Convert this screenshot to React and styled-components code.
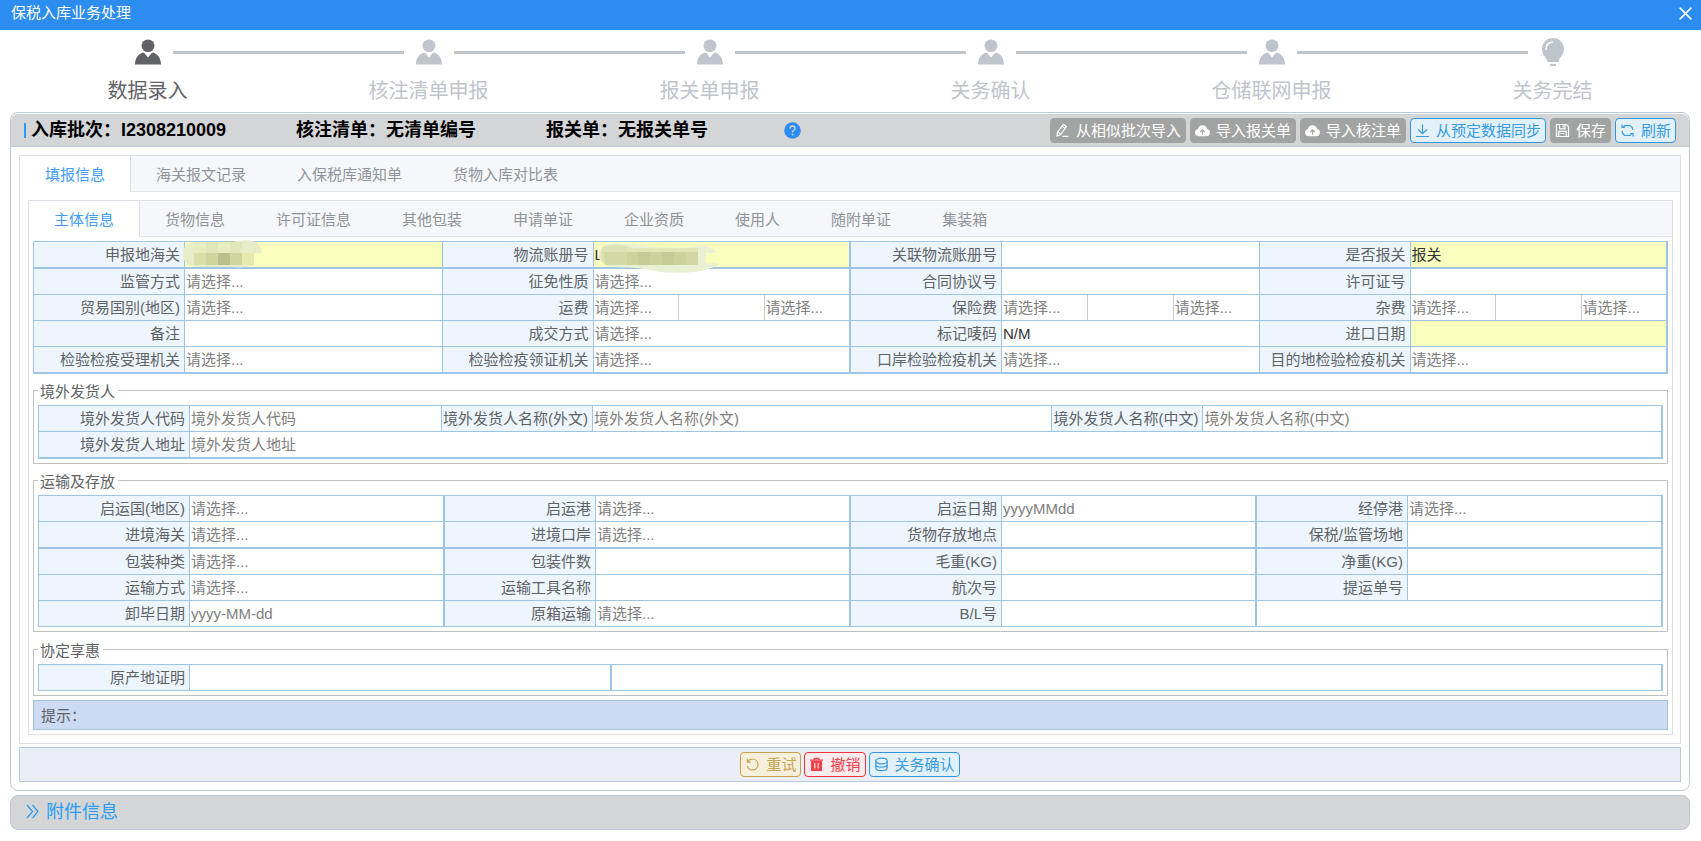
import React, { useState } from 'react'
import styled, { createGlobalStyle } from 'styled-components'

const GlobalStyle = createGlobalStyle`
* {
  box-sizing: border-box;
}
body {
  margin: 0;
  background: white;
  color: #606266;
  font-family: "Liberation Sans", "Noto Sans CJK SC", sans-serif;
  font-size: 15px;
}
input, select, button {
  font-family: inherit;
  font-size: inherit;
}
`

const TitleBar = styled.header`
display: flex;
justify-content: space-between;
align-items: center;
height: 30px;
padding: 0 9px 4px 11px;
background-color: #2d8cf0;
color: white;
`

const Title = styled.h1`
margin: 0;
font-size: 15px;
font-weight: normal;
line-height: 20px;
`

const CloseButton = styled.button`
display: flex;
padding: 0;
border: none;
background: none;
color: white;
cursor: pointer;
`

const Steps = styled.ol`
display: flex;
margin: 0;
padding: 8px 8px 7px 7px;
list-style: none;
`

const Step = styled.li`
flex: 1;
text-align: center;
color: ${props => props.$active ? '#606266' : '#c0c4cc'};
`

const StepHead = styled.div`
display: flex;
align-items: center;
height: 29px;
`

const StepLine = styled.span`
flex: 1;
height: 3px;
background-color: ${props => props.$hidden ? 'transparent' : '#c0c4cc'};
`

const StepIcon = styled.span`
display: flex;
justify-content: center;
width: 50px;
padding-bottom: 1px;
`

const StepTitle = styled.div`
margin-top: 10px;
font-size: 20px;
line-height: 28px;
`

const Panel = styled.main`
margin: 0 11px 0 10px;
padding-top: 1px;
border: 1px solid #bccad9;
border-radius: 8px;
`

const PanelHead = styled.div`
display: flex;
align-items: center;
justify-content: space-between;
height: 33px;
padding: 0 13px;
border-bottom: 1px solid #bccad9;
border-radius: 7px 7px 0 0;
background-color: #d4d5d7;
`

const Summary = styled.div`
display: flex;
align-items: center;
color: black;
font-size: 18px;
font-weight: bold;
line-height: 20px;
white-space: nowrap;
`

const Tick = styled.span`
width: 2px;
height: 15px;
margin-right: 5px;
background-color: #2a9cf5;
`

const SummaryItem = styled.span`
width: ${props => props.$width};
`

const HelpButton = styled.button`
display: flex;
padding: 0;
border: none;
background: none;
cursor: pointer;
`

const Toolbar = styled.div`
display: flex;
gap: ${props => props.$gap};
`

const tones = {
  grey: ['#a2a4a3', '#a2a4a3', 'white'],
  blue: ['#e2f0fa', '#2f96e0', '#3a9ce2'],
  gold: ['#f6efdc', '#c8a14a', '#c8a452'],
  red: ['#fdecee', '#f5303e', '#f5404c'],
}

const ToolButton = styled.button`
display: flex;
align-items: center;
gap: 6px;
height: 25px;
padding: 0 4px;
border: 1px solid ${props => tones[props.$tone][1]};
border-radius: 4px;
background-color: ${props => tones[props.$tone][0]};
color: ${props => tones[props.$tone][2]};
line-height: 23px;
white-space: nowrap;
cursor: pointer;
`

const PanelBody = styled.div`
padding: 8px;
`

const TabBox = styled.section`
border: 1px solid #dcdfe6;
background-color: white;
`

const TabBar = styled.div`
display: flex;
height: 36px;
border-bottom: 1px solid #e4e7ed;
background-color: #f5f7fa;
`

const Tab = styled.button`
height: 36px;
margin-left: -1px;
padding: 2px 25px 0;
border: 1px solid transparent;
border-top: none;
border-bottom: none;
background-color: transparent;
color: #909399;
line-height: 34px;
white-space: nowrap;
cursor: pointer;

&[aria-selected="true"] {
  border-color: #dcdfe6;
  background-color: white;
  color: #409eff;
}
`

const OuterContent = styled.div`
padding: 8px 7px 8px 8px;
`

const InnerContent = styled.form`
margin: 0;
padding: 4px;
`

const FormGrid = styled.div`
border: 1px solid #9fc5e4;
border-width: 1px 0 0 1px;
`

const FormRow = styled.div`
display: grid;
grid-template-columns: ${props => props.$columns || 'repeat(4, 1fr)'};
border-bottom: ${props => props.$thick ? '2px' : '1px'} solid #9fc5e4;
`

const Cell = styled.div`
display: flex;
min-width: 0;
height: 25px;
border-right: ${props => props.$thick ? '2px' : '1px'} solid #9fc5e4;
`

const Label = styled.label`
flex: none;
width: 151px;
padding-right: 4px;
border-right: 1px solid #9fc5e4;
background-color: #edf6fe;
line-height: 25px;
text-align: right;
white-space: nowrap;
`

const Field = styled.div`
position: relative;
display: flex;
flex: 1;
min-width: 0;
background-color: ${props => props.$required ? '#faffbd' : 'white'};
`

const TextInput = styled.input`
flex: 1;
width: 0;
min-width: 0;
height: 25px;
padding: 0 1px;
border: none;
outline: none;
background: transparent;
color: #303133;

&::placeholder {
  color: #808080;
}
select + & {
  border-left: 1px solid #ccc;
}
`

const Select = styled.select`
flex: 1;
width: 0;
min-width: 0;
height: 25px;
padding: 0 1px;
border: none;
outline: none;
appearance: none;
background: transparent;
color: ${props => props.$filled ? '#303133' : '#808080'};

input + & {
  border-left: 1px solid #ccc;
}
`

const MaskSvg = styled.svg`
position: absolute;
top: -2px;
left: ${props => props.$left};
z-index: 1;
pointer-events: none;
`

const Group = styled.fieldset`
min-width: 0;
margin: ${props => props.$gap || '6px'} 0 0;
padding: 4px;
border: 1px solid #c0c0c0;
`

const Legend = styled.legend`
padding: 2px 3px 0 2px;
line-height: 19px;
`

const Hint = styled.div`
height: 30px;
margin-top: 4px;
padding: 0 7px;
border: 1px solid #a3c3e3;
background-color: #cddbf2;
line-height: 29px;
`

const ActionBar = styled.div`
display: flex;
justify-content: center;
align-items: center;
height: 35px;
margin-top: 3px;
border: 1px solid #b9c8da;
background-color: #ebeef4;
`

const Attachment = styled.button`
display: flex;
align-items: center;
gap: 5px;
width: calc(100% - 21px);
height: 35px;
margin: 4px 11px 0 10px;
padding: 0 15px 2px;
border: 1px solid #bccad9;
border-radius: 8px;
background-color: #d4d5d7;
color: #2a9cf5;
font-size: 18px;
line-height: 24px;
cursor: pointer;
`

/* icons */

const UserIcon = () => (
  <svg width="26" height="26" viewBox="0 0 26 26" fill="currentColor">
    <ellipse cx="13" cy="6.8" rx="6.5" ry="6.3" />
    <path d="M0 25.500c0-5.400 2.600-10.300 8.200-12 .8.200 1.200.6 1.700 1.200L13 18.400l3.100-3.700c.5-.6.9-1 1.700-1.200 5.600 1.700 8.200 6.600 8.200 12z" />
  </svg>
)

const BulbIcon = () => (
  <svg width="22" height="28" viewBox="0 0 22 28" fill="currentColor">
    <path d="M11 0C4.900 0 0 4.900 0 11c0 3.500 1.500 6 3.400 8.200C4.800 20.800 5.200 22 5.300 24h11.400c.1-2 .5-3.200 1.900-4.800C20.500 17 22 14.500 22 11 22 4.900 17.100 0 11 0z" />
    <path d="M4 11.500C4 7.500 6.500 4.500 10.300 4" fill="none" stroke="white" strokeWidth="1.500" strokeLinecap="round" />
    <rect x="8" y="26" width="6" height="2" />
  </svg>
)

const CloseIcon = () => (
  <svg width="13" height="13" viewBox="0 0 13 13" stroke="currentColor" strokeWidth="1.600">
    <path d="M.6.6l11.800 11.800M12.400.6L.6 12.400" />
  </svg>
)

const HelpIcon = () => (
  <svg width="17" height="17" viewBox="0 0 17 17">
    <circle cx="8.500" cy="8.500" r="8.300" fill="#2d8cf0" />
    <path d="M6 6.700C6 5 7.100 4 8.500 4S11 5 11 6.400c0 1.800-2.500 2-2.500 4" fill="none" stroke="#d4d5d7" strokeWidth="1.300" />
    <circle cx="8.500" cy="12.600" r=".9" fill="#d4d5d7" />
  </svg>
)

const LineIcon = styled.svg.attrs({ width: 15, height: 15, viewBox: '0 0 15 15' })`
flex: none;
fill: none;
stroke: currentColor;
stroke-width: 1.2;
`

const EditIcon = () => (
  <LineIcon>
    <path d="M2 13l.4-3.700 5.800-8 3.200 2.300-5.800 8L2 13zM7 3l3.200 2.300M2.400 9.400c1.600 0 2.800.9 3.200 2.200M7.500 13.300h5.800" />
  </LineIcon>
)

const CloudIcon = () => (
  <LineIcon>
    <path d="M4 13.300a3.700 3.700 0 0 1-1-7.300 4.600 4.600 0 0 1 9 0 3.700 3.700 0 0 1-1 7.300z" fill="currentColor" stroke="none" />
    <path d="M7.500 11.800V7M5.200 9.200l2.300-2.300 2.300 2.300" stroke="#a2a4a3" />
  </LineIcon>
)

const DownloadIcon = () => (
  <LineIcon>
    <path d="M7.500 1.500v9M3 6.500l4.500 4.200L12 6.500M1 13.500h13" />
  </LineIcon>
)

const SaveIcon = () => (
  <LineIcon>
    <path d="M1.500 1.500h10l2 2v10h-12zM4.500 1.500v4.300h5.500V1.500M8.200 2.500v2M3.800 13.500V8.300h7.400v5.200M5.500 10.500h4" />
  </LineIcon>
)

const RefreshIcon = () => (
  <LineIcon>
    <path d="M4.500 2.700h5.800c1.500.8 2.500 2.200 2.600 4.300M2 4.200c1.300.2 2-.2 2.500-1.500M10.500 12.500H5C3.300 11.800 2.200 10 2.100 8M13 10.500c-1.600-.2-2.300.5-2.500 2M2 1.500v2.800h2.800M13 13.500v-3h-2.800" />
  </LineIcon>
)

const RetryIcon = () => (
  <LineIcon>
    <path d="M2.300 1.800v3.400h3.400M2.600 5C3.600 3 5.300 2 7.500 2a5.500 5.500 0 1 1-5.300 7" />
  </LineIcon>
)

const TrashIcon = () => (
  <LineIcon>
    <path d="M1 3.200h13M5.200 3V1.300h4.600V3" />
    <path d="M2 4h11v10H2z" fill="currentColor" stroke="none" />
    <path d="M5.800 6v5.500M9.200 6v5.500" stroke="#fdecee" />
  </LineIcon>
)

const CoinIcon = () => (
  <LineIcon>
    <ellipse cx="7.500" cy="4" rx="5.700" ry="2.800" />
    <path d="M1.800 4v6.800c0 1.600 2.500 2.900 5.700 2.900s5.700-1.300 5.700-2.900V4M1.800 7.300c0 1.600 2.500 2.900 5.700 2.900s5.700-1.300 5.700-2.900" />
  </LineIcon>
)

const MoreIcon = () => (
  <svg width="15" height="15" viewBox="0 0 15 15" fill="none" stroke="currentColor" strokeWidth="1.200">
    <path d="M1 1l5.500 6.500L1 14M6.500 1L12 7.500 6.500 14" />
  </svg>
)

/* strokes that hide the account numbers */

const CustomsMask = () => (
  <MaskSvg $left="-2px" width="82" height="30" viewBox="0 0 82 30">
    <path d="M0 14C0 6 5 2 14 2h36c5-2.500 22-3 25 2 2 3 3 5 4 9-3 1-6 0-9 0v12c-6 2-12 3-20 2H14C5 27 0 22 0 14z" fill="#e6edc8" />
    <path d="M11 2h48v11H11z" fill="#e8edbd" />
    <path d="M23 2h12v11H23zM47 2h12v11H47z" fill="#e2e7b8" />
    <path d="M11 13h12v12H11z" fill="#d9dfa9" />
    <path d="M23 13h12v12H23zM47 13h12v12H47z" fill="#cfd39c" />
    <path d="M35 13h12v12H35z" fill="#bcbf8c" />
    <path d="M59 13h12v12H59z" fill="#e5eab0" />
  </MaskSvg>
)

const BookMask = () => (
  <MaskSvg $left="5px" width="124" height="34" viewBox="0 0 124 34">
    <path d="M0 16C0 7 5 4 14 3.500c12-1 24 2 36 3s34 2 46 0c8-2 14-2 22 6-3 1-8 1-11 0v11c4 0 10-1 13 1-12 7-28 9-50 8-14 0-22-5-44-5C9 28 0 24 0 16z" fill="#eaf1d2" />
    <path d="M3 8c8-5 20-4 30 0v17H6C0 20 1 12 3 8z" fill="#dde3b4" />
    <path d="M27 8h72v4H27z" fill="#e1e6b5" />
    <path d="M4 12h24v13H6z" fill="#d3d8a4" />
    <path d="M28 12h71v13H28z" fill="#cdd19c" />
    <path d="M39 12h12v13H39zM63 12h12v13H63z" fill="#c6ca97" />
    <path d="M87 12h12v13H87z" fill="#d3d6a2" />
  </MaskSvg>
)

/* data */

const steps = ['数据录入', '核注清单申报', '报关单申报', '关务确认', '仓储联网申报', '关务完结']

const mainTabs = ['填报信息', '海关报文记录', '入保税库通知单', '货物入库对比表']

const formTabs = ['主体信息', '货物信息', '许可证信息', '其他包装', '申请单证', '企业资质', '使用人', '随附单证', '集装箱']

const baseRows = [
  [
    { label: '申报地海关', required: true, mask: <CustomsMask /> },
    { label: '物流账册号', required: true, value: 'L', mask: <BookMask /> },
    { label: '关联物流账册号' },
    { label: '是否报关', type: 'select', required: true, value: '报关' },
  ],
  [
    { label: '监管方式', type: 'select' },
    { label: '征免性质', type: 'select' },
    { label: '合同协议号' },
    { label: '许可证号' },
  ],
  [
    { label: '贸易国别(地区)', type: 'select' },
    { label: '运费', type: 'fee' },
    { label: '保险费', type: 'fee' },
    { label: '杂费', type: 'fee' },
  ],
  [
    { label: '备注' },
    { label: '成交方式', type: 'select' },
    { label: '标记唛码', value: 'N/M' },
    { label: '进口日期', required: true },
  ],
  [
    { label: '检验检疫受理机关', type: 'select' },
    { label: '检验检疫领证机关', type: 'select' },
    { label: '口岸检验检疫机关', type: 'select' },
    { label: '目的地检验检疫机关', type: 'select' },
  ],
]

const transportRows = [
  [
    { label: '启运国(地区)', type: 'select' },
    { label: '启运港', type: 'select' },
    { label: '启运日期', placeholder: 'yyyyMMdd' },
    { label: '经停港', type: 'select' },
  ],
  [
    { label: '进境海关', type: 'select' },
    { label: '进境口岸', type: 'select' },
    { label: '货物存放地点' },
    { label: '保税/监管场地' },
  ],
  [
    { label: '包装种类', type: 'select' },
    { label: '包装件数' },
    { label: '毛重(KG)' },
    { label: '净重(KG)' },
  ],
  [
    { label: '运输方式', type: 'select' },
    { label: '运输工具名称' },
    { label: '航次号' },
    { label: '提运单号' },
  ],
  [
    { label: '卸毕日期', placeholder: 'yyyy-MM-dd' },
    { label: '原箱运输', type: 'select' },
    { label: 'B/L号' },
    null,
  ],
]

const Dropdown = ({ id, name, value }) => (
  <Select id={id} aria-label={name} $filled={!!value} defaultValue="">
    <option value="">{value || '请选择...'}</option>
  </Select>
)

const FormCell = ({ item, thick }) => {
  if (!item) return <Cell $thick={thick} />
  const { label, type, value, placeholder, required, mask } = item
  return (
    <Cell $thick={thick}>
      <Label htmlFor={label}>{label}</Label>
      <Field $required={required}>
        {type === 'select' && <Dropdown id={label} value={value} />}
        {type === 'fee' && (
          <>
            <Dropdown id={label} />
            <TextInput aria-label={label + '金额'} />
            <Dropdown name={label + '币制'} />
          </>
        )}
        {!type && <TextInput id={label} defaultValue={value} placeholder={placeholder} />}
        {mask}
      </Field>
    </Cell>
  )
}

const Tabs = ({ items }) => {
  const [current, setCurrent] = useState(items[0])
  return (
    <TabBar role="tablist">
      {items.map(item => (
        <Tab key={item} type="button" role="tab" aria-selected={item === current} onClick={() => setCurrent(item)}>
          {item}
        </Tab>
      ))}
    </TabBar>
  )
}

const App = () => {
  return (
    <>
      <GlobalStyle />
      <TitleBar>
        <Title>保税入库业务处理</Title>
        <CloseButton aria-label="关闭"><CloseIcon /></CloseButton>
      </TitleBar>

      <Steps>
        {steps.map((step, i) => (
          <Step key={step} $active={i === 0}>
            <StepHead>
              <StepLine $hidden={i === 0} />
              <StepIcon>{i === steps.length - 1 ? <BulbIcon /> : <UserIcon />}</StepIcon>
              <StepLine $hidden={i === steps.length - 1} />
            </StepHead>
            <StepTitle>{step}</StepTitle>
          </Step>
        ))}
      </Steps>

      <Panel>
        <PanelHead>
          <Summary>
            <Tick />
            <SummaryItem $width="265px">入库批次：I2308210009</SummaryItem>
            <SummaryItem $width="250px">核注清单：无清单编号</SummaryItem>
            <SummaryItem $width="238px">报关单：无报关单号</SummaryItem>
            <HelpButton aria-label="帮助"><HelpIcon /></HelpButton>
          </Summary>
          <Toolbar $gap="4px">
            <ToolButton $tone="grey"><EditIcon />从相似批次导入</ToolButton>
            <ToolButton $tone="grey"><CloudIcon />导入报关单</ToolButton>
            <ToolButton $tone="grey"><CloudIcon />导入核注单</ToolButton>
            <ToolButton $tone="blue"><DownloadIcon />从预定数据同步</ToolButton>
            <ToolButton $tone="grey"><SaveIcon />保存</ToolButton>
            <ToolButton $tone="blue"><RefreshIcon />刷新</ToolButton>
          </Toolbar>
        </PanelHead>

        <PanelBody>
          <TabBox>
            <Tabs items={mainTabs} />
            <OuterContent>
              <TabBox>
                <Tabs items={formTabs} />
                <InnerContent>
                  <FormGrid>
                    {baseRows.map((row, i) => (
                      <FormRow key={i} $thick={i === 0 || i === 4}>
                        {row.map((item, j) => (
                          <FormCell key={j} item={item} thick={j % 2 === 1} />
                        ))}
                      </FormRow>
                    ))}
                  </FormGrid>

                  <Group>
                    <Legend>境外发货人</Legend>
                    <FormGrid>
                      <FormRow $columns="33fr 50fr 50fr">
                        <FormCell item={{ label: '境外发货人代码', placeholder: '境外发货人代码' }} />
                        <FormCell item={{ label: '境外发货人名称(外文)', placeholder: '境外发货人名称(外文)' }} />
                        <FormCell item={{ label: '境外发货人名称(中文)', placeholder: '境外发货人名称(中文)' }} thick />
                      </FormRow>
                      <FormRow $columns="1fr" $thick>
                        <FormCell item={{ label: '境外发货人地址', placeholder: '境外发货人地址' }} thick />
                      </FormRow>
                    </FormGrid>
                  </Group>

                  <Group>
                    <Legend>运输及存放</Legend>
                    <FormGrid>
                      {transportRows.map((row, i) => (
                        <FormRow key={i} $thick={i === 1}>
                          {row.map((item, j) => (
                            <FormCell key={j} item={item} thick />
                          ))}
                        </FormRow>
                      ))}
                    </FormGrid>
                  </Group>

                  <Group $gap="7px">
                    <Legend>协定享惠</Legend>
                    <FormGrid>
                      <FormRow $columns="6fr 11fr">
                        <FormCell item={{ label: '原产地证明' }} thick />
                        <FormCell thick />
                      </FormRow>
                    </FormGrid>
                  </Group>

                  <Hint>提示：</Hint>
                </InnerContent>
              </TabBox>
            </OuterContent>
          </TabBox>

          <ActionBar>
            <Toolbar $gap="3px">
              <ToolButton $tone="gold"><RetryIcon />重试</ToolButton>
              <ToolButton $tone="red"><TrashIcon />撤销</ToolButton>
              <ToolButton $tone="blue"><CoinIcon />关务确认</ToolButton>
            </Toolbar>
          </ActionBar>
        </PanelBody>
      </Panel>

      <Attachment aria-expanded="false">
        <MoreIcon />
        附件信息
      </Attachment>
    </>
  )
}

export default App
